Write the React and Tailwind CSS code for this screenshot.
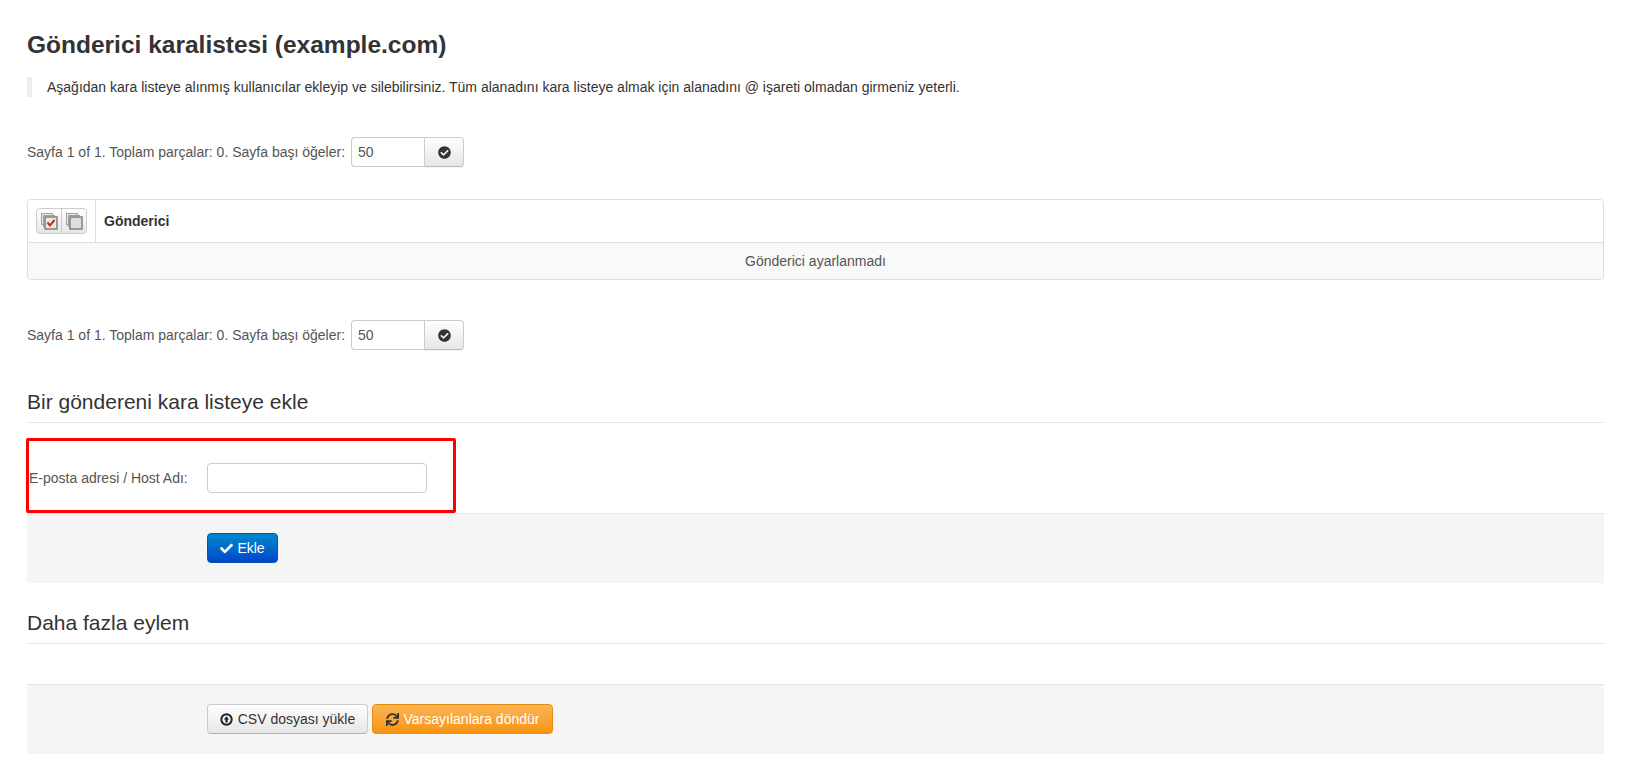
import React from "react";
import { FaCheck, FaCheckCircle, FaSync } from "react-icons/fa";

const Pager = ({ className = "" }) => (
  <div className={`flex items-center h-[30px] text-[14px] text-[#555] ${className}`}>
    <span>Sayfa 1 of 1. Toplam parçalar: 0. Sayfa başı öğeler:</span>
    <input
      readOnly
      value="50"
      className="ml-[6px] w-[73px] h-[30px] px-[6px] text-[14px] text-[#555] bg-white border border-[#ccc] border-r-0 rounded-l-[4px] outline-none"
    />
    <button className="flex items-center justify-center w-[40px] h-[30px] bg-gradient-to-b from-white to-[#e6e6e6] border border-[#ccc] border-b-[#bbb] rounded-r-[4px] shadow-[0_1px_1px_rgba(0,0,0,0.05)]">
      <FaCheckCircle className="text-[13px] text-[#333]" />
    </button>
  </div>
);

const SectionTitle = ({ children }) => (
  <h3 className="h-[36px] text-[21px] leading-[30px] text-[#333] border-b border-[#e5e5e5]">{children}</h3>
);

// stacked squares icon for the select/deselect buttons
const StackIcon = ({ checked }) => (
  <svg width="17" height="17" viewBox="0 0 17 17">
    <rect x="0.5" y="0.5" width="11" height="11" fill="#e8e8e8" stroke="#a0a0a0" />
    <rect x="2.5" y="2.5" width="11" height="11" fill="#dcdcdc" stroke="#a0a0a0" />
    <rect x="4" y="4" width="12" height="12" fill={checked ? "#e8e8e8" : "#dedede"} stroke="#808080" strokeWidth="1.5" />
    {checked && <path d="M6.5 9.5l2.5 3 4.5-5.5" fill="none" stroke="#c8281c" strokeWidth="2" />}
  </svg>
);

const CircleUpIcon = () => (
  <svg width="13" height="13" viewBox="0 0 13 13" className="shrink-0">
    <circle cx="6.5" cy="6.5" r="5.2" fill="none" stroke="#222" strokeWidth="2" />
    <path d="M6.5 3.2L9.2 6.4H7.6V9.6H5.4V6.4H3.8z" fill="#222" />
  </svg>
);

const App = () => {
  return (
    <div className="min-h-[776px] bg-white pl-[27px] pr-[25px] pt-[28px] font-['Liberation_Sans',Arial,sans-serif] text-[14px] text-[#333]">
      <h1 className="text-[24.5px] leading-[34px] font-bold text-[#333]">Gönderici karalistesi (example.com)</h1>

      <blockquote className="mt-[15px] h-[20px] pl-[15px] border-l-[5px] border-[#eee] text-[14px] leading-[20px] text-[#333]">
        Aşağıdan kara listeye alınmış kullanıcılar ekleyip ve silebilirsiniz. Tüm alanadını kara listeye almak için alanadını @ işareti olmadan girmeniz yeterli.
      </blockquote>

      <Pager className="mt-[40px]" />

      <div className="mt-[32px] border border-[#ddd] rounded-[4px] overflow-hidden">
        <div className="flex h-[43px] bg-white border-b border-[#ddd]">
          <div className="flex items-center justify-center w-[68px] border-r border-[#ddd]">
            <div className="flex h-[26px] border border-[#ccc] rounded-[4px] bg-gradient-to-b from-white to-[#e6e6e6]">
              <button className="flex items-center justify-center w-[25px] border-r border-[#ccc]">
                <StackIcon checked />
              </button>
              <button className="flex items-center justify-center w-[24px]">
                <StackIcon />
              </button>
            </div>
          </div>
          <div className="flex items-center pl-[8px] font-bold text-[#333]">Gönderici</div>
        </div>
        <div className="flex items-center justify-center h-[36px] bg-[#f9f9f9] text-[#555]">Gönderici ayarlanmadı</div>
      </div>

      <Pager className="mt-[40px]" />

      <div className="mt-[37px]">
        <SectionTitle>Bir göndereni kara listeye ekle</SectionTitle>
      </div>

      <div className="flex items-center mt-[15px] -ml-[1px] pt-[5px] w-[430px] h-[75px] border-[3px] border-[#f00] rounded-[2px] text-[#555]">
        <label className="w-[178px] text-[14px]">E-posta adresi / Host Adı:</label>
        <input className="w-[220px] h-[30px] bg-white border border-[#ccc] rounded-[4px] outline-none" />
      </div>

      <div className="h-[70px] pt-[19px] pl-[180px] bg-[#f5f5f5] border-t border-[#e5e5e5]">
        <button className="flex items-center justify-center gap-[4px] w-[71px] h-[30px] text-white text-[14px] bg-gradient-to-b from-[#0088cc] to-[#0044cc] border border-[#0055aa] rounded-[4px]">
          <FaCheck className="text-[13px]" />
          Ekle
        </button>
      </div>

      <div className="mt-[25px]">
        <SectionTitle>Daha fazla eylem</SectionTitle>
      </div>

      <div className="flex gap-[4px] mt-[40px] h-[70px] pt-[19px] pl-[180px] bg-[#f5f5f5] border-t border-[#e5e5e5]">
        <button className="flex items-center justify-center gap-[5px] w-[161px] h-[30px] text-[#333] text-[14px] bg-gradient-to-b from-white to-[#e6e6e6] border border-[#ccc] border-b-[#b3b3b3] rounded-[4px]">
          <CircleUpIcon />
          CSV dosyası yükle
        </button>
        <button className="flex items-center justify-center gap-[5px] w-[181px] h-[30px] text-white text-[14px] bg-gradient-to-b from-[#fbb450] to-[#f89406] border border-[#e38d13] rounded-[4px]">
          <FaSync className="text-[13px] text-[#333]" />
          Varsayılanlara döndür
        </button>
      </div>
    </div>
  );
};

export default App;
